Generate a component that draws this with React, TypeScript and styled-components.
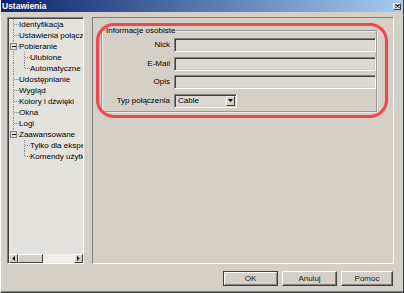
import React from 'react';
import styled, { createGlobalStyle } from 'styled-components';

const GlobalStyle = createGlobalStyle`
  html, body { margin: 0; padding: 0; background: #d4d0c8; }
  body { font-family: "Liberation Sans", Arial, sans-serif; font-size: 8px; color: #000; }
  * { box-sizing: border-box; }
`;

const Window = styled.div`
  width: 404px;
  height: 293px;
  display: flex;
  flex-direction: column;
  background: #d4d0c8;
  border-left: 1px solid #ffffff;
  border-right: 1px solid #404040;
  border-bottom: 1px solid #404040;
  overflow: hidden;
`;

const TitleBar = styled.div`
  flex: none;
  height: 12px;
  display: flex;
  align-items: center;
  justify-content: space-between;
  padding: 0 2px 0 1px;
  background: linear-gradient(to right, #0a246a, #a6caf0);
  color: #ffffff;
  font-weight: bold;
  font-size: 8.5px;
  line-height: 12px;
`;

const CloseButton = styled.div`
  width: 8px;
  height: 7px;
  display: flex;
  align-items: center;
  justify-content: center;
  background: #d4d0c8;
  border: 1px solid;
  border-color: #ffffff #404040 #404040 #ffffff;
`;

const Main = styled.div`
  flex: 1;
  display: flex;
  gap: 8px;
  padding: 5px 9px 0 6px;
  min-height: 0;
`;

const TreePanel = styled.div`
  width: 77px;
  flex: none;
  display: flex;
  flex-direction: column;
  background: #e4e2dc;
  border: 1px solid;
  border-color: #808080 #ffffff #ffffff #808080;
  box-shadow: inset 1px 1px 0 #404040;
  padding: 1px 0 0 1px;
  overflow: hidden;
`;

const TreeList = styled.div`
  flex: 1;
  overflow: hidden;
`;

const TreeRow = styled.div`
  height: 11px;
  display: flex;
  align-items: center;
  white-space: nowrap;
  line-height: 11px;
`;

const TreeLabel = styled.span`
  padding-left: 0;
`;

const HScroll = styled.div`
  flex: none;
  height: 9px;
  display: flex;
  background: #eeede9;
`;

const ScrollButton = styled.div`
  width: 9px;
  height: 9px;
  flex: none;
  display: flex;
  align-items: center;
  justify-content: center;
  background: #d4d0c8;
  border: 1px solid;
  border-color: #ffffff #404040 #404040 #ffffff;
`;

const ScrollThumb = styled.div<{ $w: number }>`
  width: ${p => p.$w}px;
  flex: none;
  background: #d4d0c8;
  border: 1px solid;
  border-color: #ffffff #404040 #404040 #ffffff;
`;

const ScrollTrack = styled.div`
  flex: 1;
`;

const ContentPanel = styled.div`
  flex: 1;
  position: relative;
  border: 1px solid;
  border-color: #808080 #ffffff #ffffff #808080;
  padding: 8px 0 0 8px;
`;

const GroupBox = styled.fieldset`
  margin: 0;
  width: 277px;
  min-width: 0;
  border: 2px groove #ebebeb;
  padding: 2px 0 3.5px 1px;
`;

const Legend = styled.legend`
  margin-left: 1px;
  padding: 0 1px;
  font-size: 8px;
  line-height: 10px;
`;

const FormGrid = styled.div`
  display: grid;
  grid-template-columns: 66px 202px;
  column-gap: 4px;
  row-gap: 4.5px;
  align-items: center;
`;

const FieldLabel = styled.div`
  text-align: right;
  white-space: nowrap;
  line-height: 14px;
`;

const TextBox = styled.div`
  height: 14px;
  background: #dcd9d3;
  border: 1px solid;
  border-color: #808080 #ffffff #ffffff #808080;
  box-shadow: inset 1px 1px 0 #404040, inset -1px -1px 0 #d4d0c8;
`;

const Combo = styled.div`
  width: 63px;
  height: 14px;
  display: flex;
  align-items: center;
  justify-content: space-between;
  background: #dcd9d3;
  border: 1px solid;
  border-color: #808080 #ffffff #ffffff #808080;
  box-shadow: inset 1px 1px 0 #404040, inset -1px -1px 0 #d4d0c8;
  padding: 1px 1px 1px 3px;
  line-height: 10px;
`;

const ComboButton = styled.div`
  width: 9px;
  height: 10px;
  display: flex;
  align-items: center;
  justify-content: center;
  background: #d4d0c8;
  border: 1px solid;
  border-color: #ffffff #404040 #404040 #ffffff;
`;

const Highlight = styled.div`
  position: absolute;
  left: 3px;
  top: 4.5px;
  width: 292px;
  height: 95px;
  border: 3px solid #f2474a;
  border-radius: 18px;
  pointer-events: none;
`;

const Footer = styled.div`
  flex: none;
  display: flex;
  justify-content: flex-end;
  gap: 4px;
  padding: 7px 10px 6px 0;
  box-shadow: inset 0 -1px 0 #808080;
`;

const Button = styled.div<{ $w: number; $default?: boolean }>`
  width: ${p => p.$w}px;
  height: 15px;
  display: flex;
  align-items: center;
  justify-content: center;
  background: #d4d0c8;
  border: 1px solid;
  border-color: ${p => (p.$default ? '#404040' : '#ffffff #404040 #404040 #ffffff')};
  box-shadow: ${p =>
    p.$default
      ? 'inset 1px 1px 0 #ffffff, inset -1px -1px 0 #808080'
      : 'inset -1px -1px 0 #808080'};
  font-size: 8px;
  color: #222;
`;

type Item = {
  label: string;
  level: 0 | 1;
  expander?: boolean;
  last?: boolean;
  parentCont?: boolean;
};

const items: Item[] = [
  { label: 'Identyfikacja', level: 0 },
  { label: 'Ustawienia połączenia', level: 0 },
  { label: 'Pobieranie', level: 0, expander: true },
  { label: 'Ulubione', level: 1, parentCont: true },
  { label: 'Automatyczne pobieranie', level: 1, last: true, parentCont: true },
  { label: 'Udostępnianie', level: 0 },
  { label: 'Wygląd', level: 0 },
  { label: 'Kolory i dźwięki', level: 0 },
  { label: 'Okna', level: 0 },
  { label: 'Logi', level: 0 },
  { label: 'Zaawansowane', level: 0, expander: true, last: true },
  { label: 'Tylko dla ekspertów', level: 1 },
  { label: 'Komendy użytkownika', level: 1, last: true },
];

const LINE = '#8a8a8a';

function TreeGlyph({ item }: { item: Item }) {
  const w = item.level === 0 ? 10 : 21;
  const x = item.level === 0 ? 4.5 : 15.5;
  const yEnd = item.last ? 5.5 : 11;
  return (
    <svg width={w} height={11} style={{ flex: 'none', display: 'block' }} shapeRendering="crispEdges">
      {item.level === 1 && item.parentCont && (
        <line x1={4.5} y1={0} x2={4.5} y2={11} stroke={LINE} strokeDasharray="1 1" />
      )}
      <line x1={x} y1={0} x2={x} y2={yEnd} stroke={LINE} strokeDasharray="1 1" />
      <line x1={x} y1={5.5} x2={w} y2={5.5} stroke={LINE} strokeDasharray="1 1" />
      {item.expander && (
        <g>
          <rect x={1.5} y={2.5} width={6} height={6} fill="#e4e2dc" stroke="#808080" />
          <line x1={2.5} y1={5.5} x2={7} y2={5.5} stroke="#000" />
        </g>
      )}
    </svg>
  );
}

function LeftArrow() {
  return (
    <svg width="3" height="5" viewBox="0 0 3 5">
      <polygon points="3,0 3,5 0.5,2.5" fill="#000" />
    </svg>
  );
}

function RightArrow() {
  return (
    <svg width="3" height="5" viewBox="0 0 3 5">
      <polygon points="0,0 0,5 2.5,2.5" fill="#000" />
    </svg>
  );
}

function DownArrow() {
  return (
    <svg width="5" height="3" viewBox="0 0 5 3">
      <polygon points="0,0 5,0 2.5,3" fill="#000" />
    </svg>
  );
}

function CloseGlyph() {
  return (
    <svg width="5" height="4" viewBox="0 0 5 4">
      <path d="M0.5 0.5 L4.5 3.5 M4.5 0.5 L0.5 3.5" stroke="#000" strokeWidth="1.1" />
    </svg>
  );
}

export default function App() {
  return (
    <>
      <GlobalStyle />
      <Window>
        <TitleBar>
          <span>Ustawienia</span>
          <CloseButton>
            <CloseGlyph />
          </CloseButton>
        </TitleBar>
        <Main>
          <TreePanel>
            <TreeList>
              {items.map(it => (
                <TreeRow key={it.label}>
                  <TreeGlyph item={it} />
                  <TreeLabel>{it.label}</TreeLabel>
                </TreeRow>
              ))}
            </TreeList>
            <HScroll>
              <ScrollButton>
                <LeftArrow />
              </ScrollButton>
              <ScrollThumb $w={25} />
              <ScrollTrack />
              <ScrollButton>
                <RightArrow />
              </ScrollButton>
            </HScroll>
          </TreePanel>
          <ContentPanel>
            <GroupBox>
              <Legend>Informacje osobiste</Legend>
              <FormGrid>
                <FieldLabel>Nick</FieldLabel>
                <TextBox />
                <FieldLabel>E-Mail</FieldLabel>
                <TextBox />
                <FieldLabel>Opis</FieldLabel>
                <TextBox />
                <FieldLabel>Typ połączenia</FieldLabel>
                <Combo>
                  <span>Cable</span>
                  <ComboButton>
                    <DownArrow />
                  </ComboButton>
                </Combo>
              </FormGrid>
            </GroupBox>
            <Highlight />
          </ContentPanel>
        </Main>
        <Footer>
          <Button $w={55} $default>OK</Button>
          <Button $w={55}>Anuluj</Button>
          <Button $w={52}>Pomoc</Button>
        </Footer>
      </Window>
    </>
  );
}
